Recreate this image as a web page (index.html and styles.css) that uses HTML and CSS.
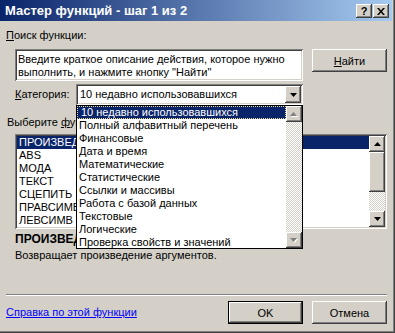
FILE: index.html
```html
<!DOCTYPE html>
<html lang="ru">
<head>
    <meta charset="UTF-8">
    <title>Мастер функций - шаг 1 из 2</title>
    <link rel="stylesheet" href="styles.css">
</head>
<body>
    <div class="window">
        <div class="frame">
            <div class="titlebar">
                <span class="title">Мастер функций - шаг 1 из 2</span>
                <div class="caption-btns">
                    <button class="cap-btn help">?</button>
                    <button class="cap-btn close">
                        <svg width="8" height="7" viewBox="0 0 8 7"><path d="M0 0h2l2 2.5L6 0h2L5 3.5 8 7H6L4 4.5 2 7H0l3-3.5z" fill="#000"/></svg>
                    </button>
                </div>
            </div>

            <div class="content">
                <div class="label search-label"><u>П</u>оиск функции:</div>

                <div class="search-row">
                    <div class="field search-field">Введите краткое описание действия, которое нужно выполнить, и нажмите кнопку "Найти"</div>
                    <button class="btn"><u>Н</u>айти</button>
                </div>

                <div class="category-row">
                    <span class="label"><u>К</u>атегория:</span>
                    <div class="field combo">
                        <span class="combo-text">10 недавно использовавшихся</span>
                        <span class="sb-btn combo-btn">
                            <svg width="7" height="4" viewBox="0 0 7 4"><path d="M0 0h7L3.5 4z" fill="#000"/></svg>
                        </span>
                    </div>
                </div>

                <div class="label pick-label">Выберите <u>ф</u>ункцию:</div>

                <div class="field func-list">
                    <ul class="items">
                        <li class="selected">ПРОИЗВЕД</li>
                        <li>ABS</li>
                        <li>МОДА</li>
                        <li>ТЕКСТ</li>
                        <li>СЦЕПИТЬ</li>
                        <li>ПРАВСИМВ</li>
                        <li>ЛЕВСИМВ</li>
                    </ul>
                    <div class="scrollbar">
                        <span class="sb-btn">
                            <svg width="7" height="4" viewBox="0 0 7 4"><path d="M0 4h7L3.5 0z" fill="#000"/></svg>
                        </span>
                        <span class="sb-btn thumb"></span>
                        <span class="track"></span>
                        <span class="sb-btn">
                            <svg width="7" height="4" viewBox="0 0 7 4"><path d="M0 0h7L3.5 4z" fill="#000"/></svg>
                        </span>
                    </div>
                </div>

                <div class="func-sig">ПРОИЗВЕД(число1;число2;...)</div>
                <div class="func-desc">Возвращает произведение аргументов.</div>

                <div class="separator"></div>

                <div class="footer">
                    <a href="#" class="help-link">Справка по этой функции</a>
                    <div class="footer-btns">
                        <button class="btn default">OK</button>
                        <button class="btn">Отмена</button>
                    </div>
                </div>
            </div>
        </div>

        <div class="dropdown">
            <ul class="items">
                <li class="selected"><span class="focus">10 недавно использовавшихся</span></li>
                <li>Полный алфавитный перечень</li>
                <li>Финансовые</li>
                <li>Дата и время</li>
                <li>Математические</li>
                <li>Статистические</li>
                <li>Ссылки и массивы</li>
                <li>Работа с базой данных</li>
                <li>Текстовые</li>
                <li>Логические</li>
                <li>Проверка свойств и значений</li>
            </ul>
            <div class="scrollbar">
                <span class="sb-btn disabled">
                    <svg width="8" height="5" viewBox="0 0 8 5"><path d="M1 5h7L4.5 1.5z" fill="#fff"/><path d="M0 4h7L3.5 0z" fill="#808080"/></svg>
                </span>
                <span class="track"></span>
                <span class="sb-btn disabled">
                    <svg width="8" height="5" viewBox="0 0 8 5"><path d="M1 1h7L4.5 5z" fill="#fff"/><path d="M0 0h7L3.5 4z" fill="#808080"/></svg>
                </span>
            </div>
        </div>
    </div>
</body>
</html>
```

FILE: styles.css
```css
* {
    margin: 0;
    padding: 0;
    box-sizing: border-box;
    font-family: 'Liberation Sans', Arial, sans-serif;
}

body {
    background-color: #d4d0c8;
    font-size: 11px;
    line-height: 13px;
    color: #000;
}

ul {
    list-style: none;
}

.window {
    position: relative;
    width: 395px;
    height: 333px;
    border-right: 1px solid #404040;
    border-bottom: 1px solid #404040;
}

.frame {
    height: 100%;
    padding-right: 1px;
    border-right: 1px solid #808080;
    border-bottom: 1px solid #808080;
}

.titlebar {
    height: 21px;
    display: flex;
    align-items: center;
    justify-content: space-between;
    padding: 0 3px 0 5px;
    background: linear-gradient(to right, #0a246a, #a6caf0);
}

.title {
    color: white;
    font-weight: bold;
    font-size: 13px;
}

.caption-btns {
    display: flex;
    gap: 1px;
    margin-top: 1px;
}

.cap-btn {
    width: 16px;
    height: 14px;
    border: none;
    background: #d4d0c8;
    display: flex;
    align-items: center;
    justify-content: center;
    font-weight: bold;
    font-size: 11px;
    box-shadow: inset -1px -1px #404040, inset 1px 1px #fff, inset -2px -2px #808080;
}

.content {
    padding: 8px 5px 0 6px;
}

.label u {
    text-decoration: underline;
}

.field {
    background: white;
    box-shadow: inset 1px 1px #808080, inset -1px -1px #fff, inset 2px 2px #404040, inset -2px -2px #d4d0c8;
}

.search-row {
    display: flex;
    justify-content: space-between;
    align-items: flex-start;
    margin-top: 7px;
    padding-left: 9px;
}

.search-field {
    width: 288px;
    height: 32px;
    padding: 4px 3px 0 3px;
}

.btn {
    width: 75px;
    height: 23px;
    border: none;
    background: #d4d0c8;
    font-size: 11px;
    box-shadow: inset -1px -1px #404040, inset 1px 1px #fff, inset -2px -2px #808080;
}

.btn.default {
    border: 1px solid #000;
}

.category-row {
    display: flex;
    align-items: center;
    margin-top: 3px;
    padding-left: 9px;
}

.combo {
    margin-left: auto;
    margin-right: 84px;
    width: 227px;
    height: 21px;
    display: flex;
    align-items: center;
    padding: 2px 2px 2px 4px;
}

.combo-text {
    flex: 1;
}

.sb-btn {
    width: 16px;
    height: 16px;
    display: flex;
    align-items: center;
    justify-content: center;
    background: #d4d0c8;
    box-shadow: inset -1px -1px #404040, inset 1px 1px #fff, inset -2px -2px #808080;
}

.combo-btn {
    height: 17px;
}

.pick-label {
    margin-top: 11px;
    padding-left: 1px;
}

.func-list {
    margin: 5px 0 0 9px;
    height: 95px;
    display: flex;
    padding: 2px;
}

.items {
    flex: 1;
}

.items li {
    height: 13px;
    padding-left: 2px;
    white-space: nowrap;
}

.items li.selected {
    background: #0a246a;
    color: white;
}

.scrollbar {
    width: 16px;
    display: flex;
    flex-direction: column;
}

.thumb {
    height: 40px;
}

.track {
    flex: 1;
    background: repeating-conic-gradient(#d4d0c8 0 25%, #fff 0 50%) 0 0 / 2px 2px;
}

.func-sig {
    margin: 4px 0 0 9px;
    font-weight: bold;
    font-size: 12px;
}

.func-desc {
    margin: 3px 0 0 9px;
}

.separator {
    margin-top: 32px;
    height: 2px;
    border-top: 1px solid #808080;
    border-bottom: 1px solid #fff;
}

.footer {
    margin-top: 5px;
    display: flex;
    align-items: center;
    justify-content: space-between;
}

.help-link {
    color: #0000ff;
    text-decoration: underline;
}

.footer-btns {
    display: flex;
    gap: 9px;
}

.dropdown {
    position: absolute;
    left: 76px;
    top: 105px;
    width: 227px;
    height: 144px;
    display: flex;
    background: white;
    border: 1px solid #000;
}

.dropdown .items li {
    padding-left: 2px;
}

.dropdown .items li.selected {
    padding: 0;
}

.focus {
    display: block;
    height: 13px;
    padding-left: 3px;
    border: 1px dotted #f0d890;
    line-height: 11px;
}

.sb-btn.disabled {
    height: 16px;
}
```
